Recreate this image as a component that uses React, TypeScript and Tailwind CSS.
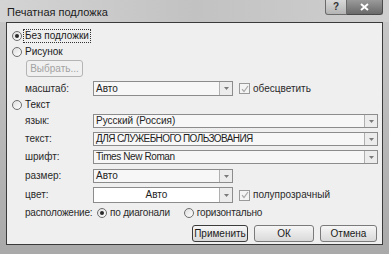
import React from "react";

const Radio = ({ checked = false }: { checked?: boolean }) => (
  <span className="flex h-[10px] w-[10px] shrink-0 items-center justify-center rounded-full border border-[#6e6e6e] bg-gradient-to-br from-[#dedede] to-[#ffffff]">
    {checked && <span className="h-[4px] w-[4px] rounded-full bg-[#2a2a2a]" />}
  </span>
);

const Check = () => (
  <span className="flex h-[11px] w-[11px] shrink-0 items-center justify-center border border-[#9a9a9a] bg-[#f4f4f4]">
    <svg width="8" height="8" viewBox="0 0 8 8">
      <path d="M1 4.2 L3 6.5 L7 1" fill="none" stroke="#a8a8a8" strokeWidth="1.2" />
    </svg>
  </span>
);

const Arrow = () => (
  <span className="flex h-full w-[13px] shrink-0 items-center justify-center border-l border-[#b0b0b0] bg-[#ececec]">
    <svg width="5" height="3" viewBox="0 0 5 3">
      <path d="M0 0 L5 0 L2.5 3 Z" fill="#7a7a7a" />
    </svg>
  </span>
);

const Select = ({
  value,
  wide = false,
  center = false,
  white = false,
  h = "h-[14px]",
  tight = "",
}: {
  value: string;
  wide?: boolean;
  center?: boolean;
  white?: boolean;
  h?: string;
  tight?: string;
}) => (
  <div
    className={`flex ${h} ${wide ? "w-[285px]" : "w-[140px]"} items-stretch border border-[#8c8c8c] ${
      white ? "bg-white" : "bg-[#f7f7f7]"
    }`}
  >
    <span
      className={`flex flex-1 items-center ${center ? "justify-center" : "pl-[2px]"} ${tight} overflow-hidden whitespace-nowrap leading-none text-[#1e1e1e]`}
    >
      {value}
    </span>
    <Arrow />
  </div>
);

const Label = ({ text }: { text: string }) => (
  <span className="w-[68px] shrink-0 leading-none text-[#2a2a2a]">{text}</span>
);

const Button = ({ text, dark = false }: { text: React.ReactNode; dark?: boolean }) => (
  <div
    className={`flex h-[17px] items-center justify-center rounded-[3px] border ${
      dark ? "border-[#3c3c3c]" : "border-[#7a7a7a]"
    } bg-gradient-to-b from-[#f6f6f6] to-[#d9d9d9] leading-none text-[#1a1a1a]`}
  >
    {text}
  </div>
);

export default function App() {
  return (
    <div
      className="flex h-[254px] w-[389px] flex-col overflow-hidden bg-gradient-to-b from-[#c9c9c9] to-[#a9a9a9] text-[10px]"
      style={{ fontFamily: '"Liberation Sans", Arial, sans-serif' }}
    >
      {/* title bar */}
      <div className="flex h-[22px] shrink-0 items-start bg-gradient-to-r from-[#d4d4d4] via-[#c2c2c2] to-[#cfcfcf]">
        <span className="mt-[7px] pl-[7px] text-[11px] leading-none text-[#1c1c1c]">Печатная подложка</span>
        <div className="ml-auto mr-[6px] flex h-[15px]">
          <div className="flex w-[22px] items-center justify-center rounded-bl-[3px] border border-t-0 border-[#6a6a6a] bg-gradient-to-b from-[#d8d8d8] to-[#b4b4b4] text-[10px] font-bold leading-none text-[#333]">
            ?
          </div>
          <div className="flex w-[36px] items-center justify-center rounded-br-[3px] border border-l-0 border-t-0 border-[#4a4a4a] bg-gradient-to-b from-[#9a9a9a] to-[#6a6a6a]">
            <svg width="9" height="8" viewBox="0 0 9 8">
              <path d="M1 1 L8 7 M8 1 L1 7" stroke="#ffffff" strokeWidth="2" />
            </svg>
          </div>
        </div>
      </div>

      {/* body */}
      <div className="flex flex-1 px-[6px] pb-[9px]">
        <div className="flex flex-1 flex-col border border-[#3a3a3a] bg-[#efefef] pl-[5px]">
          <div className="mt-[6px] flex h-[13px] items-center">
            <Radio checked />
            <span className="ml-[1px] border border-dotted border-[#333] px-[1px] py-[1px] leading-none text-[#1a1a1a]">
              Без подложки
            </span>
          </div>
          <div className="mt-[3px] flex h-[13px] items-center gap-[3px]">
            <Radio />
            <span className="leading-none text-[#1a1a1a]">Рисунок</span>
          </div>
          <div className="mt-[2px] pl-[14px]">
            <div className="flex h-[17px] w-[57px] items-center justify-center rounded-[3px] border border-[#b4b4b4] bg-[#f0f0f0] leading-none text-[#a2a2a2]">
              Выбрать...
            </div>
          </div>
          <div className="mt-[4px] flex h-[15px] items-center pl-[13px]">
            <Label text="масштаб:" />
            <Select value="Авто" h="h-[15px]" />
            <div className="ml-[6px] flex items-center gap-[3px]">
              <Check />
              <span className="leading-none text-[#2a2a2a]">обесцветить</span>
            </div>
          </div>
          <div className="mt-[2px] flex h-[13px] items-center gap-[3px]">
            <Radio />
            <span className="leading-none text-[#1a1a1a]">Текст</span>
          </div>
          <div className="mt-[3px] flex h-[14px] items-center pl-[13px]">
            <Label text="язык:" />
            <Select value="Русский (Россия)" wide />
          </div>
          <div className="mt-[4px] flex h-[14px] items-center pl-[13px]">
            <Label text="текст:" />
            <Select value="ДЛЯ СЛУЖЕБНОГО ПОЛЬЗОВАНИЯ" wide tight="tracking-[-0.6px]" />
          </div>
          <div className="mt-[4px] flex h-[14px] items-center pl-[13px]">
            <Label text="шрифт:" />
            <Select value="Times New Roman" wide tight="tracking-[-0.4px]" />
          </div>
          <div className="mt-[5px] flex h-[14px] items-center pl-[13px]">
            <Label text="размер:" />
            <Select value="Авто" />
          </div>
          <div className="mt-[4px] flex h-[16px] items-center pl-[13px]">
            <Label text="цвет:" />
            <Select value="Авто" center white h="h-[16px]" />
            <div className="ml-[6px] flex items-center gap-[3px]">
              <Check />
              <span className="leading-none text-[#2a2a2a]">полупрозрачный</span>
            </div>
          </div>
          <div className="mt-[3px] flex h-[13px] items-center pl-[13px] tracking-[-0.2px]">
            <Label text="расположение:" />
            <div className="ml-[4px] flex items-center gap-[3px]">
              <Radio checked />
              <span className="leading-none text-[#2a2a2a]">по диагонали</span>
            </div>
            <div className="ml-[14px] flex items-center gap-[3px]">
              <Radio />
              <span className="leading-none text-[#2a2a2a]">горизонтально</span>
            </div>
          </div>
          <div className="mt-[6px] flex h-[17px] justify-end gap-[6px] pr-[5px]">
            <div className="w-[56px]">
              <Button text="Применить" dark />
            </div>
            <div className="w-[60px]">
              <Button text="ОК" />
            </div>
            <div className="w-[57px]">
              <Button text="Отмена" />
            </div>
          </div>
        </div>
      </div>
    </div>
  );
}
